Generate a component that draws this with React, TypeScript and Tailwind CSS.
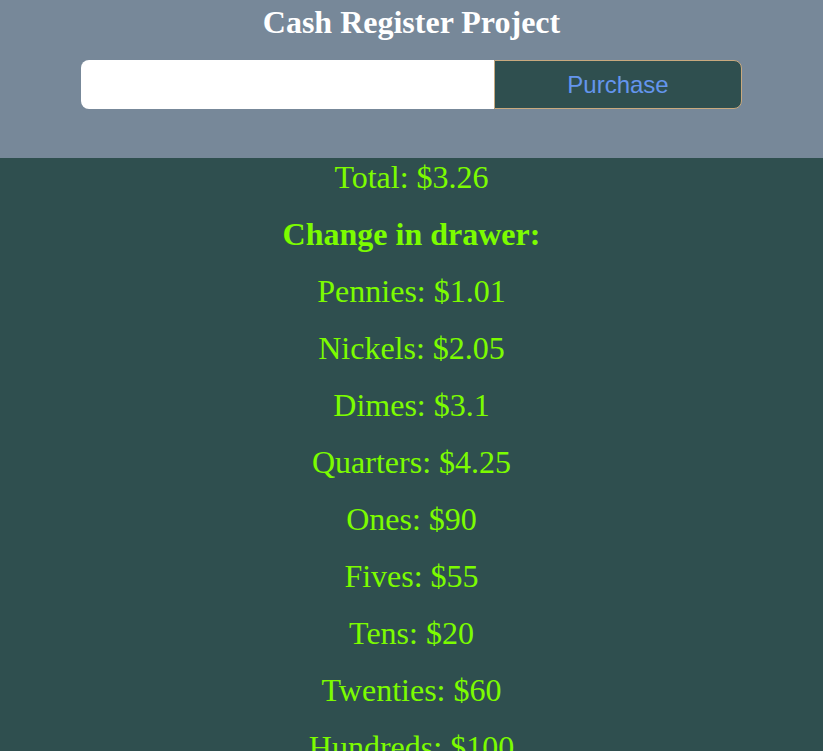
const drawer = [
  ["Pennies", "$1.01"],
  ["Nickels", "$2.05"],
  ["Dimes", "$3.1"],
  ["Quarters", "$4.25"],
  ["Ones", "$90"],
  ["Fives", "$55"],
  ["Tens", "$20"],
  ["Twenties", "$60"],
  ["Hundreds", "$100"],
];

export default function App() {
  return (
    <div className="min-h-screen bg-[#2f4f4f]" style={{ fontFamily: '"Liberation Serif", serif' }}>
      {/* Header */}
      <div className="bg-[#778899] h-[158px] flex flex-col items-center">
        <h1 className="text-[32px] leading-[44px] font-bold text-white">Cash Register Project</h1>
        <div className="mt-4 w-[661px] h-[49px] flex">
          <input
            type="text"
            className="w-[413px] h-full bg-white rounded-l-lg outline-none px-3 text-lg"
          />
          <button
            className="flex-1 h-full bg-[#2f4f4f] text-[#6495ed] text-[24px] rounded-r-lg border border-[#c8a97e]"
            style={{ fontFamily: '"Liberation Sans", Arial, sans-serif' }}
          >
            Purchase
          </button>
        </div>
      </div>

      {/* Drawer */}
      <div className="flex flex-col items-center gap-[19px] text-[#7cfc00] text-[32px] leading-[38px] pb-8">
        <p>Total: $3.26</p>
        <p className="font-bold">Change in drawer:</p>
        {drawer.map(([name, amt]) => (
          <p key={name}>
            {name}: {amt}
          </p>
        ))}
      </div>
    </div>
  );
}
